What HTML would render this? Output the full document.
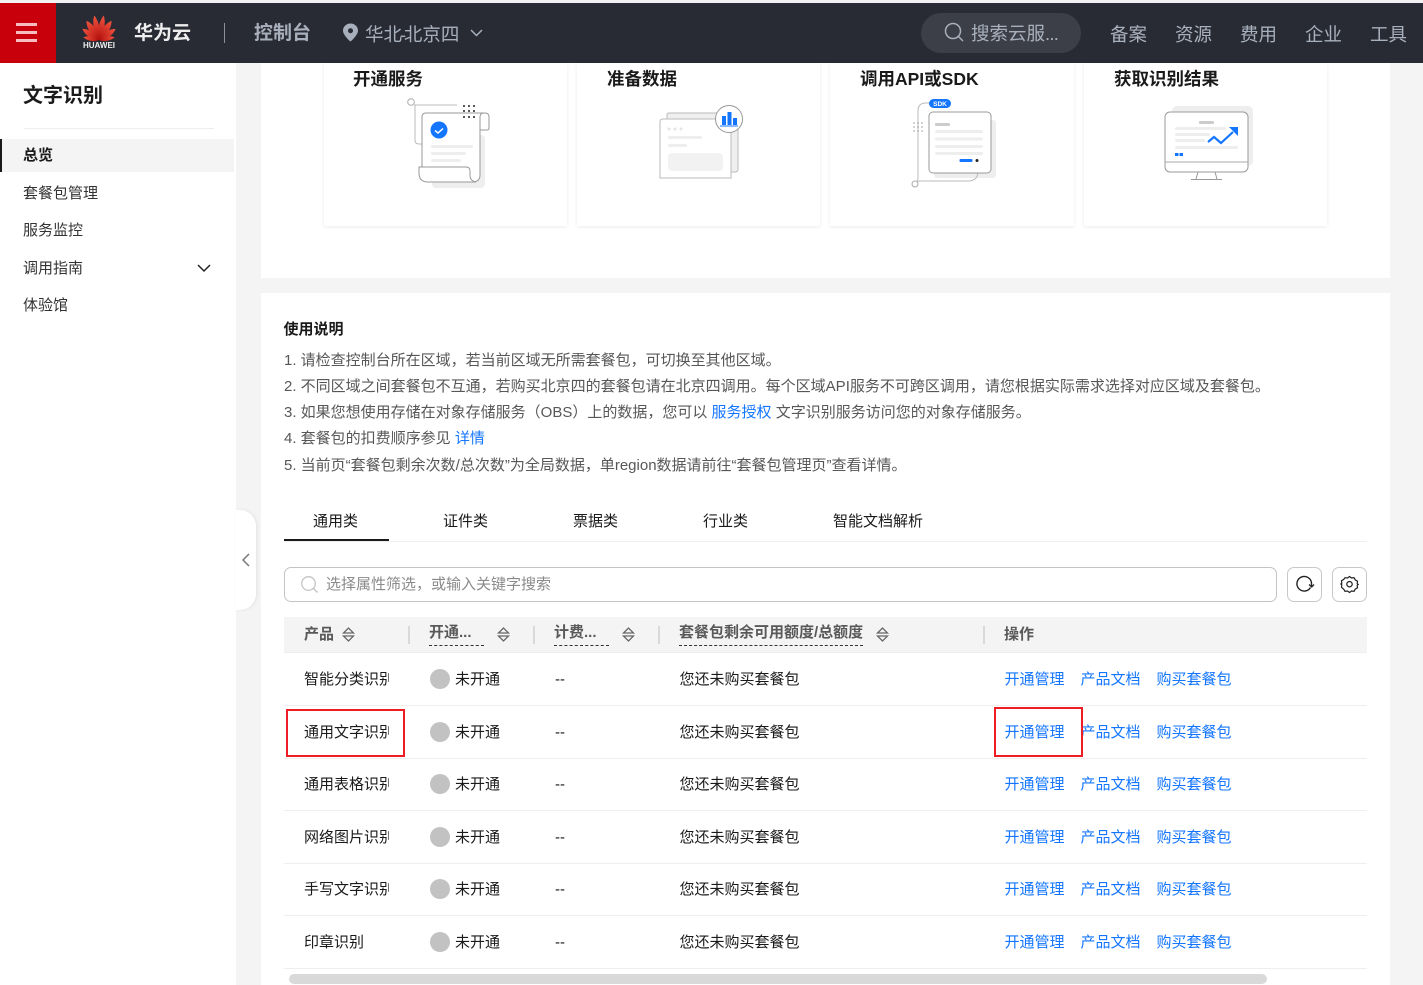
<!DOCTYPE html>
<html lang="zh"><head><meta charset="utf-8"><title>文字识别</title>
<style>
html,body{margin:0;padding:0;width:1423px;height:985px;overflow:hidden;background:#f4f4f4}
body{position:relative;font-family:"Liberation Sans","Noto Sans CJK SC",sans-serif;font-size:15px;color:#1a1a1a}
div,span.a,a,svg.a{position:absolute}
.t{white-space:nowrap;line-height:22px;height:22px;margin-top:2px}
.b{font-weight:700}
a{color:#1476ff;text-decoration:none;white-space:nowrap;line-height:22px;margin-top:2px;margin-left:-.5px}
.n{color:#a9b0bd;font-size:18.5px;line-height:26px;white-space:nowrap;top:22px}
.ct{font-size:17.5px;font-weight:700;top:66.500px;line-height:24px;white-space:nowrap;color:#1a1a1a}
.card{top:63px;height:163px;background:#fff;box-shadow:0 1px 4px rgba(0,0,0,.08)}
.i{color:#575757;left:284px;white-space:nowrap;line-height:22px;margin-top:2px}
.m{left:23px;white-space:nowrap;line-height:22px;color:#333;margin-top:1px}
.th{top:625px;font-weight:700;font-size:15px;line-height:20px;color:#595959;white-space:nowrap}
.sep{top:626px;width:2px;height:18px;background:#d9d9d9}
.u{top:645px;height:0;border-top:1px dashed #333}
.l{left:284px;width:1083px;height:1px;background:#eee}
.d{left:430px;width:20px;height:20px;border-radius:50%;background:#c2c2c2}
.tab{top:511px;line-height:22px;white-space:nowrap}
.rb{border:2px solid #ee1c25}
</style></head><body>

<div style="left:0;top:0;width:1423px;height:3px;background:#f2f2f2"></div>
<div style="left:0;top:3px;width:1423px;height:60px;background:#282b33"></div>
<div style="left:0;top:3px;width:56px;height:60px;background:#c7000b"></div>
<div style="left:16px;top:23px;width:21px;height:2.500px;background:#f6bcc0"></div>
<div style="left:16px;top:31px;width:21px;height:2.500px;background:#f6bcc0"></div>
<div style="left:16px;top:39px;width:21px;height:2.500px;background:#f6bcc0"></div>

<svg class="a" style="left:81px;top:14px" width="36" height="28" viewBox="0 0 36 28">
<defs><linearGradient id="g" x1="0" y1="0" x2="0" y2="1"><stop offset="0" stop-color="#f2543f"/><stop offset="1" stop-color="#b10f0c"/></linearGradient></defs>
<g fill="url(#g)">
<path d="M18 26C14 18 14.500 7 18 1C21.500 7 22 18 18 26Z" transform="rotate(-11 18 26)"/>
<path d="M18 26C14 18 14.500 7 18 1C21.500 7 22 18 18 26Z" transform="rotate(11 18 26)"/>
<path d="M18 26C13.500 19 14 9 18 3C22 9 22.500 19 18 26Z" transform="rotate(-33 18 26)"/>
<path d="M18 26C13.500 19 14 9 18 3C22 9 22.500 19 18 26Z" transform="rotate(33 18 26)"/>
<path d="M18 26C14 20 14 12 18 6C22 12 22 20 18 26Z" transform="rotate(-56 18 26)"/>
<path d="M18 26C14 20 14 12 18 6C22 12 22 20 18 26Z" transform="rotate(56 18 26)"/>
<path d="M18 26C15 22 15 15 18 10C21 15 21 22 18 26Z" transform="rotate(-80 18 26)"/>
<path d="M18 26C15 22 15 15 18 10C21 15 21 22 18 26Z" transform="rotate(80 18 26)"/>
</g></svg>
<div style="left:83px;top:41px;font-size:8px;font-weight:700;color:#eee;line-height:10px;white-space:nowrap">HUAWEI</div>
<div style="left:134px;top:21px;font-size:19px;font-weight:700;color:#eee;line-height:26px;white-space:nowrap">华为云</div>
<div style="left:224px;top:23px;width:1px;height:20px;background:#8a8f99"></div>
<div style="left:254px;top:21px;font-size:19px;font-weight:700;color:#a9b0bd;line-height:26px;white-space:nowrap">控制台</div>
<svg class="a" style="left:342px;top:23px" width="17" height="19" viewBox="0 0 17 19"><path fill-rule="evenodd" d="M8.500 .5C4.300 .5 1 3.700 1 7.600 1 12.300 8.500 18.500 8.500 18.500s7.500-6.200 7.500-10.900C16 3.700 12.700 .5 8.500 .5zm0 4.700a2.500 2.500 0 1 1 0 5 2.500 2.500 0 0 1 0-5z" fill="#a9b0bd"/></svg>
<div class="n" style="left:365px">华北<span style="margin:0 -2.200px">-</span>北京四</div>
<svg class="a" style="left:469px;top:28px" width="15" height="10" viewBox="0 0 15 10"><path d="M2 2l5.500 5.500L13 2" fill="none" stroke="#a9b0bd" stroke-width="1.500"/></svg>

<div style="left:921px;top:13px;width:160px;height:40px;border-radius:20px;background:#3c3f47"></div>
<svg class="a" style="left:943px;top:21px" width="22" height="22" viewBox="0 0 22 22"><circle cx="10" cy="10" r="7.500" fill="none" stroke="#a9b0bd" stroke-width="1.500"/><path d="M15.500 15.500L20 20" stroke="#a9b0bd" stroke-width="1.500"/></svg>
<div class="n" style="left:971px;top:21px">搜索云服<span style="letter-spacing:-.8px">...</span></div>
<div class="n" style="left:1110px">备案</div>
<div class="n" style="left:1175px">资源</div>
<div class="n" style="left:1240px">费用</div>
<div class="n" style="left:1305px">企业</div>
<div class="n" style="left:1370px">工具</div>

<div style="left:0;top:63px;width:236px;height:922px;background:#fff"></div>
<div style="left:23px;top:82px;font-size:20px;font-weight:700;line-height:28px;white-space:nowrap">文字识别</div>
<div style="left:24px;top:128px;width:190px;height:1px;background:#eee"></div>
<div style="left:0;top:139px;width:234px;height:33px;background:#f4f4f4"></div>
<div style="left:0;top:139px;width:2px;height:33px;background:#1a1a1a"></div>
<div class="m b" style="top:144px;color:#1a1a1a">总览</div>
<div class="m" style="top:182px">套餐包管理</div>
<div class="m" style="top:219px">服务监控</div>
<div class="m" style="top:257px">调用指南</div>
<div class="m" style="top:294px">体验馆</div>
<svg class="a" style="left:196px;top:263px" width="16" height="10" viewBox="0 0 16 10"><path d="M2 2l6 6 6-6" fill="none" stroke="#222" stroke-width="1.500"/></svg>

<div style="left:236px;top:510px;width:20px;height:100px;background:#fff;border-radius:0 16px 16px 0;box-shadow:1px 0 3px rgba(0,0,0,.08)"></div>
<svg class="a" style="left:240px;top:552px" width="12" height="16" viewBox="0 0 12 16"><path d="M9 2L3 8l6 6" fill="none" stroke="#777" stroke-width="1.500"/></svg>

<div style="left:261px;top:63px;width:1129px;height:215px;background:#fff"></div>
<div class="card" style="left:324px;width:243px"></div>
<div class="card" style="left:577px;width:243px"></div>
<div class="card" style="left:830px;width:244px"></div>
<div class="card" style="left:1084px;width:243px"></div>
<div class="ct" style="left:353px">开通服务</div>
<div class="ct" style="left:607px">准备数据</div>
<div class="ct" style="left:860px">调用API或SDK</div>
<div class="ct" style="left:1114px">获取识别结果</div>

<svg class="a" style="left:405px;top:98px" width="95" height="95" viewBox="405 98 95 95">
<rect x="432" y="135" width="53" height="53" rx="4" fill="#eee"/>
<circle cx="411" cy="102" r="3.300" fill="#fff" stroke="#aaa"/>
<path d="M414 105H457" stroke="#bbb" fill="none"/>
<path d="M415 105V140q0 4 4 4h4" stroke="#bbb" fill="none"/>
<path d="M480 113h5q4 0 4 4v11q0 2-2 2h-7z" fill="#fff" stroke="#999"/>
<path d="M422 167V117q0-4 4-4h58q-4 0-4 4v58q0 6-6 7h-6" fill="#fff" stroke="#999"/>
<path d="M419 167h47q4 0 4 4v4q0 6 6 7h-48q-9 0-9-9z" fill="#fff" stroke="#999"/>
<circle cx="439" cy="130" r="8.500" fill="#1476ff"/><path d="M435 130.500l3 2.500 5-4.500" fill="none" stroke="#fff" stroke-width="1.500"/>
<rect x="431" y="145" width="42" height="3" rx="1.500" fill="#eee"/><rect x="431" y="152" width="35" height="3" rx="1.500" fill="#eee"/><rect x="431" y="159" width="30" height="3" rx="1.500" fill="#eee"/>
<g fill="#222"><circle cx="464" cy="106" r="1"/><circle cx="469" cy="106" r="1"/><circle cx="474" cy="106" r="1"/><circle cx="464" cy="111" r="1"/><circle cx="469" cy="111" r="1"/><circle cx="474" cy="111" r="1"/><circle cx="464" cy="117" r="1"/><circle cx="469" cy="117" r="1"/><circle cx="474" cy="117" r="1"/></g>
</svg>

<svg class="a" style="left:655px;top:100px" width="95" height="85" viewBox="655 100 95 85">
<path d="M667 120v-5q0-2 2-2h65q4 0 4 4v52q0 3-3 3h-5" fill="#efefef" stroke="#bbb"/>
<path d="M660 178V122q0-3 3-3h65q3 0 3 3v56z" fill="#fff" stroke="#bbb"/>
<g fill="#e5e5e5"><circle cx="669" cy="129" r="1.500"/><circle cx="675" cy="129" r="1.500"/><circle cx="681" cy="129" r="1.500"/></g>
<rect x="668" y="136" width="34" height="3" rx="1.500" fill="#eee"/><rect x="668" y="144" width="19" height="3" rx="1.500" fill="#eee"/>
<rect x="668" y="153" width="55" height="18" rx="4" fill="#f2f2f2"/>
<circle cx="729" cy="119" r="13.500" fill="#fff" stroke="#999"/>
<path d="M722 116h4v9h-4zM727.500 112h4v13h-4zM733 118h4v7h-4z" fill="#1476ff"/><path d="M720 126h18" stroke="#1476ff"/>
</svg>

<svg class="a" style="left:905px;top:96px" width="95" height="95" viewBox="905 96 95 95">
<rect x="934" y="120" width="62" height="58" rx="3" fill="#eee"/>
<path d="M930 103h-4q-8 0-8 8v64q0 9-3 9" fill="none" stroke="#bbb"/>
<path d="M918 181h50q10 0 10-10" fill="none" stroke="#bbb"/>
<circle cx="915" cy="184" r="3" fill="#fff" stroke="#aaa"/>
<rect x="929" y="112" width="62" height="61" rx="4" fill="#fff" stroke="#999"/>
<rect x="929" y="99" width="22" height="9" rx="4.500" fill="#1476ff"/>
<text x="940" y="106" font-size="6.500" font-weight="700" fill="#fff" text-anchor="middle" font-family="Liberation Sans">SDK</text>
<rect x="935" y="123" width="15" height="3" rx="1" fill="#ccc"/>
<rect x="935" y="130" width="48" height="3" rx="1.500" fill="#eee"/><rect x="935" y="137.500" width="48" height="3" rx="1.500" fill="#eee"/><rect x="935" y="145" width="48" height="3" rx="1.500" fill="#eee"/><rect x="935" y="152" width="48" height="3" rx="1.500" fill="#eee"/>
<rect x="959.500" y="159" width="13" height="3" rx="1" fill="#1476ff"/><circle cx="977" cy="160.500" r="1.500" fill="#222"/>
<g fill="#666"><circle cx="914" cy="123" r=".6"/><circle cx="918" cy="123" r=".6"/><circle cx="922" cy="123" r=".6"/><circle cx="914" cy="127" r=".6"/><circle cx="918" cy="127" r=".6"/><circle cx="922" cy="127" r=".6"/><circle cx="914" cy="131" r=".6"/><circle cx="918" cy="131" r=".6"/><circle cx="922" cy="131" r=".6"/></g>
</svg>

<svg class="a" style="left:1160px;top:100px" width="100" height="85" viewBox="1160 100 100 85">
<rect x="1172" y="106" width="81" height="60" rx="5" fill="#eee"/>
<rect x="1165" y="112" width="83" height="60" rx="5" fill="#fff" stroke="#999"/>
<path d="M1165 162h83" stroke="#aaa"/>
<path d="M1198 172l-2 7M1215 172l2 7M1191 179.500h31" stroke="#999" fill="none"/>
<rect x="1199" y="121" width="15" height="3" rx="1" fill="#ccc"/>
<rect x="1175" y="127" width="51" height="3" rx="1.500" fill="#eee"/><rect x="1175" y="133" width="35" height="3" rx="1.500" fill="#eee"/><rect x="1175" y="139" width="30" height="3" rx="1.500" fill="#eee"/><rect x="1175" y="146" width="63" height="3" rx="1.500" fill="#eee"/>
<rect x="1175" y="153" width="3.500" height="3" fill="#1476ff"/><rect x="1179.500" y="153" width="3.500" height="3" fill="#1476ff"/>
<path d="M1208 142l6-5 7 6 12-11" fill="none" stroke="#1476ff" stroke-width="2.200"/><path d="M1229 127h9v9z" fill="#1476ff"/>
</svg>

<div style="left:261px;top:293px;width:1129px;height:692px;background:#fff"></div>
<div class="t b" style="left:283.500px;top:317px;font-size:15px">使用说明</div>
<div class="i" style="top:348px">1. 请检查控制台所在区域，若当前区域无所需套餐包，可切换至其他区域。</div>
<div class="i" style="top:374px">2. 不同区域之间套餐包不互通，若购买北京四的套餐包请在北京四调用。每个区域API服务不可跨区调用，请您根据实际需求选择对应区域及套餐包。</div>
<div class="i" style="top:400px">3. 如果您想使用存储在对象存储服务（OBS）上的数据，您可以 <span style="color:#1476ff">服务授权</span> 文字识别服务访问您的对象存储服务。</div>
<div class="i" style="top:426px">4. 套餐包的扣费顺序参见 <span style="color:#1476ff">详情</span></div>
<div class="i" style="top:453px">5. 当前页“套餐包剩余次数/总次数”为全局数据，单region数据请前往“套餐包管理页”查看详情。</div>

<div class="tab" style="left:313px">通用类</div>
<div class="tab" style="left:443px">证件类</div>
<div class="tab" style="left:573px">票据类</div>
<div class="tab" style="left:703px">行业类</div>
<div class="tab" style="left:833px">智能文档解析</div>
<div style="left:284px;top:541px;width:1083px;height:1px;background:#eee"></div>
<div style="left:284px;top:539px;width:105px;height:2px;background:#1a1a1a"></div>

<div style="left:284px;top:567px;width:991px;height:33px;border:1px solid #c4c4c4;border-radius:7px"></div>
<svg class="a" style="left:300px;top:575px" width="19" height="19" viewBox="0 0 19 19"><circle cx="8.500" cy="8.500" r="6.800" fill="none" stroke="#c4c4c4" stroke-width="1.300"/><path d="M13.500 13.500l4 4" stroke="#c4c4c4" stroke-width="1.300"/></svg>
<div class="t" style="left:326px;top:572px;color:#8a8a8a">选择属性筛选，或输入关键字搜索</div>
<div style="left:1287px;top:567px;width:33px;height:33px;border:1px solid #c8c8c8;border-radius:7px"></div>
<svg class="a" style="left:1294px;top:574px" width="21" height="21" viewBox="0 0 21 21"><path d="M16.500 13.500A7.300 7.300 0 1 1 17.500 9V12" fill="none" stroke="#222" stroke-width="1.400"/><path d="M15 10.500l2.700 2.500 2.300-2.500" fill="none" stroke="#222" stroke-width="1.300"/></svg>
<div style="left:1332px;top:567px;width:33px;height:33px;border:1px solid #c8c8c8;border-radius:7px"></div>
<svg class="a" style="left:1340px;top:575px" width="19" height="19" viewBox="0 0 19 19"><path d="M9.500 1.500l2 1.500 2.500-.3 1.300 2.200 2.200 1.300-.3 2.500 1 .8-1 .8.3 2.500-2.200 1.300-1.300 2.200-2.500-.3-2 1.500-2-1.500-2.500.3-1.300-2.200L1.500 12.300l.3-2.500-1-.8 1-.8-.3-2.500 2.200-1.300L5 2.700l2.500.3z" fill="none" stroke="#222" stroke-width="1.200"/><circle cx="9.500" cy="9.200" r="2.700" fill="none" stroke="#222" stroke-width="1.200"/></svg>

<div style="left:284px;top:617px;width:1083px;height:35px;background:#f4f4f4"></div>
<div class="l" style="top:652px"></div>
<div class="th" style="left:304px">产品</div>
<div class="th" style="left:429px;top:623px;width:55px;overflow:hidden">开通...</div>
<div class="th" style="left:554px;top:623px;width:55px;overflow:hidden">计费...</div>
<div class="th" style="left:679px;top:623px">套餐包剩余可用额度/总额度</div>
<div class="th" style="left:1004px">操作</div>
<div class="u" style="left:429px;width:55px"></div>
<div class="u" style="left:554px;width:55px"></div>
<div class="u" style="left:679px;width:184px"></div>
<div class="sep" style="left:408px"></div><div class="sep" style="left:533px"></div><div class="sep" style="left:658px"></div><div class="sep" style="left:983px"></div>
<svg class="a" style="left:342px;top:626px" width="13" height="17" viewBox="0 0 13 17"><path d="M1.500 7l5-5 5 5zM1.500 10l5 5 5-5z" fill="none" stroke="#666" stroke-width="1.300"/></svg>
<svg class="a" style="left:497px;top:626px" width="13" height="17" viewBox="0 0 13 17"><path d="M1.500 7l5-5 5 5zM1.500 10l5 5 5-5z" fill="none" stroke="#666" stroke-width="1.300"/></svg>
<svg class="a" style="left:622px;top:626px" width="13" height="17" viewBox="0 0 13 17"><path d="M1.500 7l5-5 5 5zM1.500 10l5 5 5-5z" fill="none" stroke="#666" stroke-width="1.300"/></svg>
<svg class="a" style="left:876px;top:626px" width="13" height="17" viewBox="0 0 13 17"><path d="M1.500 7l5-5 5 5zM1.500 10l5 5 5-5z" fill="none" stroke="#666" stroke-width="1.300"/></svg>

<div class="t" style="left:304px;top:667px;width:85px;overflow:hidden">智能分类识别</div><div class="d" style="top:669px"></div><div class="t" style="left:455px;top:667px">未开通</div><div class="t" style="left:555px;top:667px">--</div><div class="t" style="left:679.500px;top:667px">您还未购买套餐包</div><a style="left:1005px;top:667px">开通管理</a><a style="left:1081px;top:667px">产品文档</a><a style="left:1157px;top:667px">购买套餐包</a>
<div class="l" style="top:705px"></div>
<div class="t" style="left:304px;top:720px;width:85px;overflow:hidden">通用文字识别</div><div class="d" style="top:722px"></div><div class="t" style="left:455px;top:720px">未开通</div><div class="t" style="left:555px;top:720px">--</div><div class="t" style="left:679.500px;top:720px">您还未购买套餐包</div><a style="left:1005px;top:720px">开通管理</a><a style="left:1081px;top:720px">产品文档</a><a style="left:1157px;top:720px">购买套餐包</a>
<div class="l" style="top:758px"></div>
<div class="t" style="left:304px;top:772px;width:85px;overflow:hidden">通用表格识别</div><div class="d" style="top:774px"></div><div class="t" style="left:455px;top:772px">未开通</div><div class="t" style="left:555px;top:772px">--</div><div class="t" style="left:679.500px;top:772px">您还未购买套餐包</div><a style="left:1005px;top:772px">开通管理</a><a style="left:1081px;top:772px">产品文档</a><a style="left:1157px;top:772px">购买套餐包</a>
<div class="l" style="top:810px"></div>
<div class="t" style="left:304px;top:825px;width:85px;overflow:hidden">网络图片识别</div><div class="d" style="top:827px"></div><div class="t" style="left:455px;top:825px">未开通</div><div class="t" style="left:555px;top:825px">--</div><div class="t" style="left:679.500px;top:825px">您还未购买套餐包</div><a style="left:1005px;top:825px">开通管理</a><a style="left:1081px;top:825px">产品文档</a><a style="left:1157px;top:825px">购买套餐包</a>
<div class="l" style="top:863px"></div>
<div class="t" style="left:304px;top:877px;width:85px;overflow:hidden">手写文字识别</div><div class="d" style="top:879px"></div><div class="t" style="left:455px;top:877px">未开通</div><div class="t" style="left:555px;top:877px">--</div><div class="t" style="left:679.500px;top:877px">您还未购买套餐包</div><a style="left:1005px;top:877px">开通管理</a><a style="left:1081px;top:877px">产品文档</a><a style="left:1157px;top:877px">购买套餐包</a>
<div class="l" style="top:915px"></div>
<div class="t" style="left:304px;top:930px;width:85px;overflow:hidden">印章识别</div><div class="d" style="top:932px"></div><div class="t" style="left:455px;top:930px">未开通</div><div class="t" style="left:555px;top:930px">--</div><div class="t" style="left:679.500px;top:930px">您还未购买套餐包</div><a style="left:1005px;top:930px">开通管理</a><a style="left:1081px;top:930px">产品文档</a><a style="left:1157px;top:930px">购买套餐包</a>
<div class="l" style="top:968px"></div>

<div style="left:289px;top:974px;width:978px;height:10px;border-radius:5px;background:#d9d9d9"></div>

<div class="rb" style="left:286px;top:709px;width:115px;height:44px"></div>
<div class="rb" style="left:994px;top:707px;width:85px;height:46px"></div>
</body></html>
